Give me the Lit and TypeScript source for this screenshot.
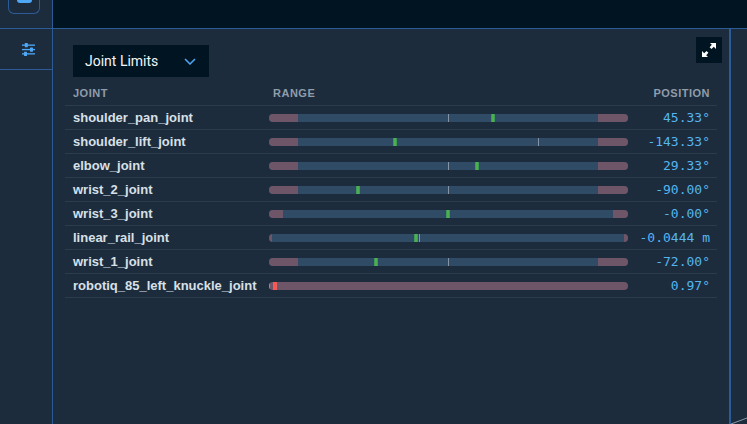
import { LitElement, html, css } from "lit";
import { customElement } from "lit/decorators.js";

interface Joint { name: string; lo: number; hi: number; tick: number | null; mark: number; pos: string; bad?: boolean; }

const X0 = 269, W = 359;
const JOINTS: Joint[] = [
  { name: "shoulder_pan_joint", lo: 298, hi: 598, tick: 448, mark: 493, pos: "45.33°" },
  { name: "shoulder_lift_joint", lo: 298, hi: 598, tick: 538, mark: 395, pos: "-143.33°" },
  { name: "elbow_joint", lo: 298, hi: 598, tick: 448, mark: 477, pos: "29.33°" },
  { name: "wrist_2_joint", lo: 298, hi: 598, tick: 448, mark: 358, pos: "-90.00°" },
  { name: "wrist_3_joint", lo: 283, hi: 613, tick: 448, mark: 448, pos: "-0.00°" },
  { name: "linear_rail_joint", lo: 272, hi: 624, tick: 419, mark: 416, pos: "-0.0444 m" },
  { name: "wrist_1_joint", lo: 298, hi: 598, tick: 448, mark: 376, pos: "-72.00°" },
  { name: "robotiq_85_left_knuckle_joint", lo: 628, hi: 628, tick: 269, mark: 275, pos: "0.97°", bad: true },
];

const px = (x: number) => x - X0;

@customElement("app-root")
export class AppRoot extends LitElement {
  static styles = css`
    :host { display: block; width: 747px; height: 424px; overflow: hidden; position: relative; background: #1d2c3c; font-family: "Liberation Sans", Arial, sans-serif; }
    .shell { display: grid; grid-template-columns: 53px 678px 16px; grid-template-rows: 29px 395px; height: 424px; }
    .side-top { border-right: 1px solid #2b5c96; border-bottom: 1px solid #2b5c96; display: flex; justify-content: flex-start; padding-left: 8px; box-sizing: border-box; }
    .logo-btn { width: 32px; height: 14px; box-sizing: border-box; border: 1px solid #2b5c96; border-top: none; border-radius: 0 0 6px 6px; display: flex; justify-content: center; }
    .blob { width: 15px; height: 3px; background: #4fa8f5; border-radius: 0 0 7px 7px; }
    .topbar { grid-column: 2 / 4; background: #001421; border-bottom: 1px solid #2b5c96; box-sizing: border-box; }
    .side { border-right: 1px solid #2b5c96; box-sizing: border-box; }
    .side-item { height: 41px; border-bottom: 1px solid #2b5c96; box-sizing: border-box; display: flex; align-items: center; justify-content: center; padding-left: 5px; }
    .side-item svg { display: block; }
    .panel { border-right: 2px solid #2b5c96; box-sizing: border-box; padding: 16px 12px 0 12px; position: relative; }
    .select { margin-left: 8px; width: 136px; height: 32px; background: #001421; color: #f0f6fb; font: 14px Roboto, sans-serif; display: flex; align-items: center; justify-content: space-between; padding: 0 13px 0 12px; box-sizing: border-box; }
    .expand { position: absolute; top: 8px; right: 7px; width: 26px; height: 26px; background: #001421; display: flex; align-items: center; justify-content: center; }
    .row { display: grid; grid-template-columns: 196px 367px 90px; height: 24px; align-items: center; border-bottom: 1px solid #2b3c4e; box-sizing: border-box; }
    .head { height: 29px; align-items: end; padding-bottom: 6px; color: #8f9dab; font-size: 11px; font-weight: 700; letter-spacing: 0.5px; }
    .head .h0 { padding-left: 8px; }
    .head .h1 { padding-left: 12px; }
    .head .h2 { text-align: right; padding-right: 8px; }
    .name { padding-left: 8px; color: #d8e0e8; font-size: 13px; font-weight: 700; white-space: nowrap; }
    .range { padding-left: 8px; padding-top: 1px; }
    .track { position: relative; width: 359px; height: 8px; border-radius: 4px; overflow: hidden; background: #304b66; display: flex; justify-content: space-between; }
    .limit { background: #6e5568; height: 8px; }
    .tick { position: absolute; top: 0; width: 1px; height: 8px; background: #8595a6; }
    .mark { position: absolute; top: 0; width: 4px; height: 8px; background: #4caf50; box-sizing: border-box; border-left: 1px solid #3f9a55; border-right: 1px solid #3f9a55; }
    .mark.bad { background: #ff5350; border-color: #e86060; }
    .pos { text-align: right; padding-right: 8px; color: #55b5f0; font: 13px "DejaVu Sans Mono", monospace; white-space: nowrap; }
    .corner { position: absolute; right: 0; bottom: 0; display: block; }
  `;

  render() {
    return html`
      <div class="shell">
        <div class="side-top"><div class="logo-btn"><div class="blob"></div></div></div>
        <div class="topbar"></div>
        <div class="side">
          <div class="side-item">
            <svg width="13" height="13" viewBox="0 0 13 13" fill="#4fa8f5">
              <rect x="0" y="1.5" width="13" height="1.3"/><rect x="2.8" y="0" width="3" height="4.3" rx="0.6"/>
              <rect x="0" y="5.9" width="13" height="1.3"/><rect x="8" y="4.4" width="3" height="4.3" rx="0.6"/>
              <rect x="0" y="10.2" width="13" height="1.3"/><rect x="2" y="8.7" width="3" height="4.3" rx="0.6"/>
            </svg>
          </div>
        </div>
        <div class="panel">
          <div class="select">
            <span>Joint Limits</span>
            <svg width="12" height="7" viewBox="0 0 12 7" fill="none" stroke="#4fa8f5" stroke-width="1.5"><path d="M1 1l5 5 5-5"/></svg>
          </div>
          <div class="expand">
            <svg width="14" height="14" viewBox="0 0 14 14" fill="#fff">
              <path d="M8 0h6v6l-2.2-2.2-2.3 2.3L7.6 4.2l2.2-2.4z"/>
              <path d="M6 14H0V8l2.2 2.2 2.3-2.3 1.9 1.9-2.2 2.4z"/>
            </svg>
          </div>
          <div class="row head">
            <div class="h0">JOINT</div><div class="h1">RANGE</div><div class="h2">POSITION</div>
          </div>
          ${JOINTS.map(j => html`
            <div class="row">
              <div class="name">${j.name}</div>
              <div class="range">
                <div class="track">
                  <div class="limit" style="width:${px(j.lo)}px"></div>
                  <div class="limit" style="width:${X0 + W - j.hi}px"></div>
                  ${j.tick !== null ? html`<div class="tick" style="left:${px(j.tick)}px"></div>` : ""}
                  <div class="mark ${j.bad ? "bad" : ""}" style="left:${px(j.mark) - 2}px"></div>
                </div>
              </div>
              <div class="pos">${j.pos}</div>
            </div>`)}
        </div>
        <div></div>
      </div>
      <svg class="corner" width="16" height="7" viewBox="0 0 16 7"><path d="M0 7L16 1" stroke="#8a97a5" stroke-width="1" fill="none"/></svg>
    `;
  }
}
